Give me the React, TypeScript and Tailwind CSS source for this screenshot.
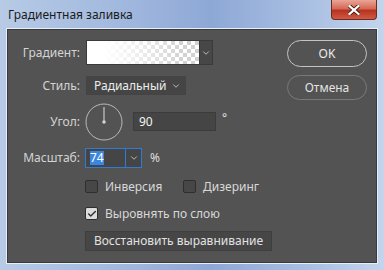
import { ChevronDown, Check } from "lucide-react";

function Label({ children }: { children: React.ReactNode }) {
  return (
    <div className="w-[73px] shrink-0 pr-[1px] text-right text-[12px] text-[#d4d4d4]">
      {children}
    </div>
  );
}

function CheckBox({ checked }: { checked?: boolean }) {
  return checked ? (
    <div className="flex h-[13px] w-[13px] items-center justify-center rounded-[2px] border border-[#2e2e2e] bg-[#dcdcdc]">
      <Check size={10} strokeWidth={3.5} className="text-[#333]" />
    </div>
  ) : (
    <div className="h-[13px] w-[13px] rounded-[2px] border border-[#2e2e2e] bg-[#474747]" />
  );
}

export default function App() {
  return (
    <div
      className="relative flex h-[270px] w-[384px] flex-col overflow-hidden bg-[linear-gradient(to_right,#b7cbe6,#9fb6dd_35%,#8ea8d6_55%,#a9bfe2_80%,#c3d4ec)]"
      style={{ fontFamily: '"Noto Sans", "Open Sans", sans-serif' }}
    >
      {/* Title bar */}
      <div className="flex h-[29px] shrink-0 items-center pl-[8px] text-[12px] text-[#1b1b1b]">
        Градиентная заливка
      </div>
      <div className="absolute right-[7px] top-0 flex h-[20px] w-[46px] items-center justify-center rounded-b-[4px] border border-t-0 border-[#6d2a20] bg-[linear-gradient(to_bottom,#e9a597,#d56a55_45%,#b8321f_55%,#cf5a45)]">
        <svg width="12" height="10" viewBox="0 0 12 10">
          <path d="M1.5 1 L10.5 9 M10.5 1 L1.5 9" stroke="#4a1a12" strokeWidth="4" strokeLinecap="square" />
          <path d="M1.5 1 L10.5 9 M10.5 1 L1.5 9" stroke="#ffffff" strokeWidth="2.2" strokeLinecap="square" />
        </svg>
      </div>

      {/* Client area */}
      <div className="mx-[7px] mb-[7px] flex flex-1 border border-[#3b3b3b] bg-[#535353] shadow-[0_0_0_1px_#e6eefa]">
        <div className="flex flex-1 flex-col pt-[10px]">
          {/* Gradient */}
          <div className="flex h-[25px] items-center gap-[5px]">
            <Label>Градиент:</Label>
            <div className="flex h-[25px] border border-[#3a3a3a]">
              <div className="h-full w-[112px] bg-[conic-gradient(#d2d2d2_25%,#fff_0_50%,#d2d2d2_0_75%,#fff_0)] bg-[length:8px_8px]">
                <div className="h-full w-full bg-[linear-gradient(to_right,#fff_15%,rgba(255,255,255,0.5)_55%,rgba(255,255,255,0)_85%)]" />
              </div>
              <div className="flex w-[13px] items-center justify-center border-l border-[#3a3a3a] bg-[#474747]">
                <ChevronDown size={10} className="text-[#cfcfcf]" />
              </div>
            </div>
          </div>

          {/* Style */}
          <div className="mt-[11px] flex h-[19px] items-center gap-[5px]">
            <Label>Стиль:</Label>
            <div className="flex h-[19px] w-[100px] items-center justify-between rounded-[1px] border border-[#444] bg-[#454545] pl-[7px] pr-[4px] text-[12px] text-[#ececec]">
              <span>Радиальный</span>
              <ChevronDown size={10} className="text-[#cfcfcf]" />
            </div>
          </div>

          {/* Angle */}
          <div className="mt-[8px] flex h-[37px] items-center gap-[4px]">
            <Label>Угол:</Label>
            <svg width="38" height="38" viewBox="0 0 38 38" className="shrink-0">
              <circle cx="19" cy="19" r="18" fill="none" stroke="#b9b9b9" strokeWidth="1" />
              <line x1="19" y1="19" x2="19" y2="4" stroke="#c8c8c8" strokeWidth="1.2" />
              <circle cx="19" cy="19" r="1.8" fill="#d0d0d0" />
            </svg>
            <div className="ml-[6px] flex h-[19px] w-[83px] items-center border border-[#3c3c3c] bg-[#454545] pl-[5px] text-[12px] text-[#f2f2f2]">
              90
            </div>
            <span className="mb-[7px] ml-[2px] text-[12px] leading-none text-[#e0e0e0]">°</span>
          </div>

          {/* Scale */}
          <div className="mt-[8px] flex h-[20px] items-center gap-[4px]">
            <Label>Масштаб:</Label>
            <div className="flex h-[20px] w-[57px] border border-[#2f7bd6] bg-[#454545]">
              <div className="flex flex-1 items-center pl-[4px]">
                <span className="bg-[#3a86e0] text-[12px] leading-[14px] text-white">74</span>
              </div>
              <div className="flex w-[16px] items-center justify-center border-l border-[#2f7bd6]">
                <ChevronDown size={10} className="text-[#cfcfcf]" />
              </div>
            </div>
            <span className="ml-[4px] text-[12px] text-[#dedede]">%</span>
          </div>

          {/* Checkboxes */}
          <div className="ml-[77px] mt-[12px] flex h-[13px] items-center text-[12px] text-[#d8d8d8]">
            <CheckBox />
            <span className="ml-[7px] w-[78px]">Инверсия</span>
            <CheckBox />
            <span className="ml-[7px]">Дизеринг</span>
          </div>
          <div className="ml-[77px] mt-[14px] flex h-[13px] items-center text-[12px] text-[#d8d8d8]">
            <CheckBox checked />
            <span className="ml-[7px]">Выровнять по слою</span>
          </div>

          <div className="ml-[77px] mt-[11px]">
            <div className="flex h-[20px] w-[187px] items-center justify-center border border-[#3e3e3e] bg-[#464646] text-[12px] text-[#e2e2e2]">
              Восстановить выравнивание
            </div>
          </div>
        </div>

        {/* Buttons */}
        <div className="mr-[9px] mt-[10px] flex w-[80px] flex-col gap-[8px]">
          <div className="flex h-[27px] items-center justify-center rounded-full border-[1.5px] border-[#c4c4c4] text-[12px] text-[#ececec]">
            OK
          </div>
          <div className="flex h-[25px] items-center justify-center rounded-full border border-[#797979] text-[12px] text-[#e2e2e2]">
            Отмена
          </div>
        </div>
      </div>
    </div>
  );
}
